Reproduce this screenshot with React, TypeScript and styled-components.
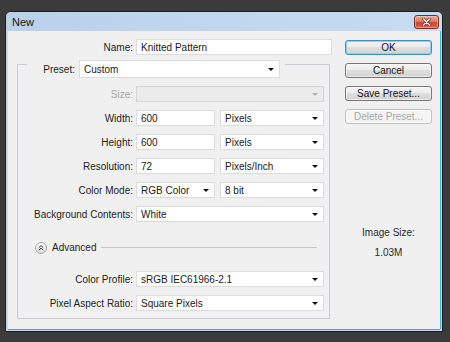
import React from "react";
import styled, { createGlobalStyle } from "styled-components";

const Global = createGlobalStyle`
  html, body { margin: 0; padding: 0; background: #3b3b3b; }
  body {
    width: 450px; height: 342px; overflow: hidden;
    font-family: "Liberation Sans", Arial, sans-serif;
  }
  * { box-sizing: border-box; }
`;

const Page = styled.div`
  padding: 11px 0 0 5px;
  height: 342px;
`;

const Window = styled.div`
  width: 438px;
  height: 321px;
  border: 1px solid #1c1c1c;
  border-radius: 6px 6px 0 0;
  background: #c6d9ed;
  padding: 0 2px 2px;
  display: flex;
  flex-direction: column;
`;

const TitleBar = styled.div`
  height: 19px;
  margin: 0 -2px;
  padding: 0 3px 0 6px;
  display: flex;
  align-items: center;
  justify-content: space-between;
  border-radius: 5px 5px 0 0;
  background: linear-gradient(to right, #bad1ea, #c9dcf0);
`;

const Title = styled.span`
  font-size: 11px;
  color: #141414;
`;

const CloseButton = styled.div`
  width: 25px;
  height: 14px;
  border: 1px solid #7e2b1f;
  border-radius: 3px;
  background: linear-gradient(to bottom, #eaa99a 0%, #dc7c64 45%, #c9462d 55%, #d56a50 100%);
  display: flex;
  align-items: center;
  justify-content: center;
  box-shadow: inset 0 0 0 1px rgba(255, 220, 210, 0.45);
`;

const Client = styled.div`
  flex: 1;
  background: #f0f0f0;
  display: flex;
  padding-top: 8px;
  box-shadow: 0 1px 0 #3db4d5, 1px 0 0 #3db4d5;
`;

const LeftColumn = styled.div`
  width: 332px;
  display: flex;
  flex-direction: column;
`;

const RightColumn = styled.div`
  width: 87px;
  margin-left: 5px;
  padding-top: 1px;
  display: flex;
  flex-direction: column;
  gap: 8px;
`;

const Row = styled.div`
  display: flex;
  align-items: center;
  height: 16px;
`;

const Label = styled.span<{ $w: number; $disabled?: boolean }>`
  width: ${(p) => p.$w}px;
  margin-right: 3px;
  text-align: right;
  font-size: 10px;
  color: ${(p) => (p.$disabled ? "#a7a7a7" : "#1e1e1e")};
  white-space: nowrap;
`;

const Field = styled.div<{ $w: number; $h?: number }>`
  width: ${(p) => p.$w}px;
  height: ${(p) => p.$h ?? 16}px;
  background: #ffffff;
  border: 1px solid #dcdcdc;
  padding-left: 4px;
  font-size: 10px;
  color: #1a1a1a;
  display: flex;
  align-items: center;
  white-space: nowrap;
`;

const SelectBox = styled(Field)<{ $disabled?: boolean }>`
  justify-content: space-between;
  padding-right: 5px;
  background: ${(p) => (p.$disabled ? "#ebebeb" : "#ffffff")};
  border-color: ${(p) => (p.$disabled ? "#d6d6d6" : "#dcdcdc")};
`;

const Arrow = styled.span<{ $disabled?: boolean }>`
  width: 0;
  height: 0;
  border-left: 3px solid transparent;
  border-right: 3px solid transparent;
  border-top: 3px solid ${(p) => (p.$disabled ? "#b0b0b0" : "#111111")};
`;

const Gap = styled.span`
  width: 5px;
  flex: none;
`;

const GroupBox = styled.div`
  margin: 9px 0 0 9px;
  width: 313px;
  height: 255px;
  border: 1px solid #c9cdd1;
  display: flex;
  flex-direction: column;
  padding: 0 4px 0 0;
`;

const GroupHeader = styled.div`
  margin: -5px 0 0 9px;
  width: fit-content;
  height: 18px;
  padding: 0 5px 0 0;
  background: #f0f0f0;
  display: flex;
  align-items: center;
`;

const GroupRows = styled.div`
  display: flex;
  flex-direction: column;
  gap: 8px;
  margin-top: 8px;
`;

const AdvancedRow = styled.div`
  display: flex;
  align-items: center;
  height: 13px;
  margin: 19px 8px 0 17px;
`;

const Circle = styled.div`
  width: 12px;
  height: 12px;
  border-radius: 50%;
  border: 1px solid #a9a9a9;
  background: linear-gradient(to bottom, #ffffff, #dedede);
  display: flex;
  align-items: center;
  justify-content: center;
  flex: none;
`;

const AdvancedText = styled.span`
  font-size: 10px;
  color: #1e1e1e;
  margin-left: 5px;
`;

const Rule = styled.div`
  flex: 1;
  height: 1px;
  margin-left: 5px;
  background: #c4c4c4;
`;

const AdvRows = styled.div`
  display: flex;
  flex-direction: column;
  gap: 8px;
  margin-top: 17px;
`;

const Button = styled.div<{ $variant?: "default" | "disabled" }>`
  height: 15px;
  border-radius: 3px;
  display: flex;
  align-items: center;
  justify-content: center;
  font-size: 10px;
  border: 1px solid
    ${(p) =>
      p.$variant === "default" ? "#3b8fc3" : p.$variant === "disabled" ? "#bdc1c4" : "#757575"};
  color: ${(p) => (p.$variant === "disabled" ? "#a8a8a8" : "#141414")};
  background: ${(p) =>
    p.$variant === "disabled"
      ? "#f4f4f4"
      : "linear-gradient(to bottom, #f4f4f4 0%, #ececec 50%, #dedede 50%, #d2d2d2 100%)"};
  box-shadow: ${(p) =>
    p.$variant === "default" ? "inset 0 0 0 1px #86d5f3" : "inset 0 0 0 1px rgba(255,255,255,0.6)"};
`;

const Info = styled.div`
  margin-top: 94px;
  display: flex;
  flex-direction: column;
  align-items: center;
  gap: 7px;
  font-size: 10px;
  line-height: 13px;
  color: #2a2a2a;
`;

type Unit = { value: string; unit: string };

const sizeRows: (Unit & { label: string })[] = [
  { label: "Width:", value: "600", unit: "Pixels" },
  { label: "Height:", value: "600", unit: "Pixels" },
  { label: "Resolution:", value: "72", unit: "Pixels/Inch" },
];

const LABEL_W = 115;

export default function App() {
  return (
    <>
      <Global />
      <Page>
        <Window>
          <TitleBar>
            <Title>New</Title>
            <CloseButton>
              <svg width="9" height="8" viewBox="0 0 9 8">
                <path d="M1.5 1 L7.5 7 M7.5 1 L1.5 7" stroke="#5a1a10" strokeWidth="2.6" strokeLinecap="round" />
                <path d="M1.5 1 L7.5 7 M7.5 1 L1.5 7" stroke="#ffffff" strokeWidth="1.5" strokeLinecap="round" />
              </svg>
            </CloseButton>
          </TitleBar>
          <Client>
            <LeftColumn>
              <Row>
                <Label $w={125}>Name:</Label>
                <Field $w={196}>Knitted Pattern</Field>
              </Row>
              <GroupBox>
                <GroupHeader>
                  <Label $w={48}>Preset:</Label>
                  <SelectBox $w={201} $h={18} style={{ marginLeft: 1 }}>
                    <span>Custom</span>
                    <Arrow />
                  </SelectBox>
                </GroupHeader>
                <GroupRows>
                  <Row>
                    <Label $w={LABEL_W} $disabled>
                      Size:
                    </Label>
                    <SelectBox $w={188} $disabled>
                      <span />
                      <Arrow $disabled />
                    </SelectBox>
                  </Row>
                  {sizeRows.map((r) => (
                    <Row key={r.label}>
                      <Label $w={LABEL_W}>{r.label}</Label>
                      <Field $w={79}>{r.value}</Field>
                      <Gap />
                      <SelectBox $w={104}>
                        <span>{r.unit}</span>
                        <Arrow />
                      </SelectBox>
                    </Row>
                  ))}
                  <Row>
                    <Label $w={LABEL_W}>Color Mode:</Label>
                    <SelectBox $w={79}>
                      <span>RGB Color</span>
                      <Arrow />
                    </SelectBox>
                    <Gap />
                    <SelectBox $w={104}>
                      <span>8 bit</span>
                      <Arrow />
                    </SelectBox>
                  </Row>
                  <Row>
                    <Label $w={LABEL_W}>Background Contents:</Label>
                    <SelectBox $w={188}>
                      <span>White</span>
                      <Arrow />
                    </SelectBox>
                  </Row>
                </GroupRows>
                <AdvancedRow>
                  <Circle>
                    <svg width="6" height="6" viewBox="0 0 6 6">
                      <path d="M0.8 2.6 L3 0.6 L5.2 2.6 M0.8 5.2 L3 3.2 L5.2 5.2" stroke="#333" strokeWidth="1" fill="none" />
                    </svg>
                  </Circle>
                  <AdvancedText>Advanced</AdvancedText>
                  <Rule />
                </AdvancedRow>
                <AdvRows>
                  <Row>
                    <Label $w={LABEL_W}>Color Profile:</Label>
                    <SelectBox $w={188}>
                      <span>sRGB IEC61966-2.1</span>
                      <Arrow />
                    </SelectBox>
                  </Row>
                  <Row>
                    <Label $w={LABEL_W}>Pixel Aspect Ratio:</Label>
                    <SelectBox $w={188}>
                      <span>Square Pixels</span>
                      <Arrow />
                    </SelectBox>
                  </Row>
                </AdvRows>
              </GroupBox>
            </LeftColumn>
            <RightColumn>
              <Button $variant="default">OK</Button>
              <Button>Cancel</Button>
              <Button>Save Preset...</Button>
              <Button $variant="disabled">Delete Preset...</Button>
              <Info>
                <span>Image Size:</span>
                <span>1.03M</span>
              </Info>
            </RightColumn>
          </Client>
        </Window>
      </Page>
    </>
  );
}
